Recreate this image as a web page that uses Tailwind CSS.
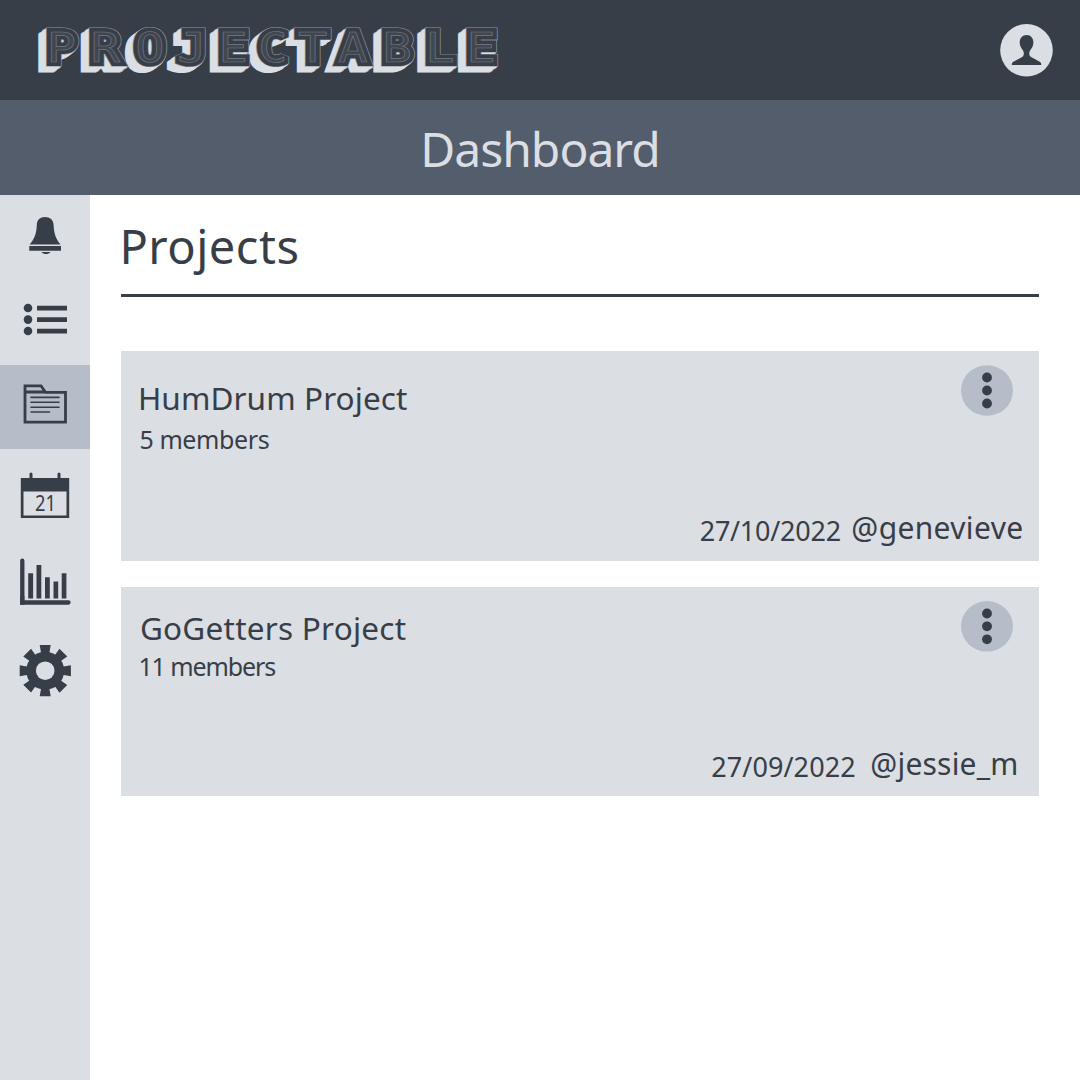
<!DOCTYPE html>
<html lang="en">
<head>
<meta charset="utf-8">
<title>Projectable</title>
<script src="https://cdn.jsdelivr.net/npm/@tailwindcss/browser@4"></script>
</head>
<body class="flex h-[1080px] w-[1080px] flex-col overflow-hidden bg-white font-['Noto_Sans','Open_Sans',sans-serif] text-[#383e48]">
<header class="flex h-[99.5px] shrink-0 items-center justify-between bg-[#383e48] pr-[27px]">
  <svg class="h-[99px] w-[510px]" viewBox="0 0 510 99" role="img" aria-label="Projectable" font-family="'DejaVu Sans Mono', monospace" font-size="41.5" text-anchor="middle" stroke-miterlimit="2">
    <g transform="scale(1.17 1)">
      <g fill="#dbdee3" stroke="#dbdee3" stroke-width="9.2">
        <use href="#wordmark" x="-6.700" y="6"/><use href="#wordmark" x="-5.900" y="5.25"/><use href="#wordmark" x="-5.100" y="4.5"/><use href="#wordmark" x="-4.200" y="3.75"/><use href="#wordmark" x="-3.400" y="3"/><use href="#wordmark" x="-2.500" y="2.25"/><use href="#wordmark" x="-1.700" y="1.5"/><use href="#wordmark" x="-.8" y=".75"/>
      </g>
      <use href="#wordmark" fill="#8f949c" stroke="#8f949c" stroke-width="9.2"/>
      <use href="#wordmark" fill="#383e48" stroke="#383e48" stroke-width="8"/>
      <g fill="#41474f" stroke="#747a84" stroke-width=".6"><text id="wordmark" x="52.500 90 128.200 164.200 199.200 233.200 267.100 301.700 339.500 376 411.200" y="62.2">PROJECTABLE</text></g>
    </g>
  </svg>
  <svg class="mt-[1px] h-[53px] w-[53px]" viewBox="0 0 53 53"><circle cx="26.5" cy="26.3" r="26.3" fill="#dbdee3"/><path fill="#383e48" d="M26.7 11c-4.500 0-7 3.300-7 7.500 0 3.500 1.500 5.500 3 7.500 1.400 2 1.600 4.500.3 6.300-1.800 1.500-6.500 3.500-9.200 5.200-1.500.9-2 1.500-2 3.500h29.500c0-2-.5-2.600-2-3.500-2.700-1.700-7.400-3.700-9.200-5.200-1.300-1.800-1.100-4.300.3-6.300 1.500-2 3-4 3-7.500 0-4.200-2.500-7.500-6.700-7.500z"/></svg>
</header>
<div class="flex h-[95.500px] shrink-0 justify-center bg-[#545d6b] pt-[25.5px]">
  <h1 class="text-[48px] leading-none tracking-[-1px] text-[#dbdee3]">Dashboard</h1>
</div>
<div class="flex grow">
  <nav class="flex w-[90px] shrink-0 flex-col items-center bg-[#dbdee3]">
    <a class="h-[85px] w-full"><svg class="h-full w-full" viewBox="0 0 90 85" fill="#383e48"><path d="M45 22c-5 0-8 3-8.200 7.700-.2 8-2.300 14.500-7.200 19.800h31c-4.900-5.300-6.700-11.800-7-19.800-.2-4.700-3.600-7.700-8.600-7.700zM29.300 51h31.700v4.800H29.300zM41.500 57h9c-2 2.800-7 2.800-9 0z"/></svg></a>
    <a class="h-[85px] w-full"><svg class="h-full w-full" viewBox="0 0 90 85" fill="#383e48"><circle cx="28" cy="28" r="4.300"/><circle cx="28" cy="39.600" r="4.300"/><circle cx="28" cy="51" r="4.300"/><path d="M37 25.700h30v4.800H37zM37 37.200h30V42H37zM37 48.700h30v4.800H37z"/></svg></a>
    <a class="h-[84px] w-full bg-[#b6bdc8]"><svg class="h-full w-full" viewBox="0 0 90 84" fill="none" stroke="#383e48"><path stroke-width="2.800" d="M25 42.500V20.800h16l4.500 6.500H65.500V57.200H25V27h20.500"/><path stroke-width="1.600" stroke-linecap="round" d="M31 32.400h28M31 37.300h28M31 42.200h28M31 47h18.500"/></svg></a>
    <a class="h-[87px] w-full"><svg class="h-full w-full" viewBox="0 0 90 87" fill="#383e48"><path fill-rule="evenodd" d="M20.800 29H69.200v40H20.800zM23.500 42.500v24h43v-24z"/><path fill="none" stroke="#383e48" stroke-width="3" stroke-linecap="round" d="M31 25v6M59 25v6"/><text x="45.500" y="62.300" text-anchor="middle" font-size="21.500" textLength="21" lengthAdjust="spacingAndGlyphs">21</text></svg></a>
    <a class="h-[88px] w-full"><svg class="h-full w-full" viewBox="0 0 90 88" fill="#383e48"><path fill="none" stroke="#383e48" stroke-width="4.300" stroke-linecap="round" d="M22.300 24.700V66.500H68.500"/><path d="M20.200 60h4.200v8.700h-4.200zM28.200 37.200h4.900v25.300h-4.900zM36.500 29h4.800v33.500h-4.800zM45 41.200h4.800v21.300H45zM53.500 45.500h4.700v17h-4.700zM61.700 37.200h4.700v25.300h-4.700z"/></svg></a>
    <a class="h-[88px] w-full"><svg class="h-full w-full" viewBox="0 0 90 88" fill="#383e48"><g transform="translate(45.200 46.700)"><path id="teeth" d="M-5.500-25.700H5.500L4-17V17L5.500 25.500H-5.500L-4 17V-17z"/><use href="#teeth" transform="rotate(45)"/><use href="#teeth" transform="rotate(90)"/><use href="#teeth" transform="rotate(135)"/><circle r="19"/><circle r="9.300" fill="#dbdee3"/></g></svg></a>
  </nav>
  <main class="flex grow flex-col pt-[28px] pr-[41px] pl-[31.400px]">
    <h2 class="ml-[-4px] pl-[2px] text-[47px] leading-none tracking-[0.5px]">Projects</h2>
    <div class="mt-[24px] h-[3px] w-full bg-[#383e48]"></div>
    <article class="mt-[54px] flex h-[209.500px] shrink-0 flex-col justify-between bg-[#dbdee3]">
      <div class="flex justify-between pr-[26px] pl-[16.5px]">
        <div class="pt-[31px]">
          <h3 class="text-[31.5px] leading-none tracking-[0.090px]">HumDrum Project</h3>
          <p class="mt-[13px] pl-[1.5px] text-[25px] leading-none tracking-[-0.4px]">5 members</p>
        </div>
        <button class="mt-[14px] h-[51px] w-[52px]" aria-label="Project options"><svg class="h-full w-full" viewBox="0 0 52 51"><ellipse cx="26" cy="25.500" rx="26" ry="25.300" fill="#b6bdc8"/><g fill="#383e48"><circle cx="26" cy="12.500" r="4.900"/><circle cx="26" cy="25.500" r="4.900"/><circle cx="26" cy="38.500" r="4.900"/></g></svg></button>
      </div>
      <div class="flex items-end justify-end gap-[10.500px] pr-[15.500px] pb-[16.500px]">
        <time class="text-[27px] leading-none tracking-[-0.25px]">27/10/2022</time>
        <span class="mb-[1px] text-[30px] leading-none tracking-[0.350px]">@genevieve</span>
      </div>
    </article>
    <article class="mt-[26.500px] flex h-[209px] shrink-0 flex-col justify-between bg-[#dbdee3]">
      <div class="flex justify-between pr-[26px] pl-[18.5px]">
        <div class="pt-[25px]">
          <h3 class="text-[31.5px] leading-none tracking-[0.240px]">GoGetters Project</h3>
          <p class="mt-[10px] ml-[-1.500px] text-[25px] leading-none tracking-[-1.100px]">11 members</p>
        </div>
        <button class="mt-[14px] h-[51px] w-[52px]" aria-label="Project options"><svg class="h-full w-full" viewBox="0 0 52 51"><ellipse cx="26" cy="25.300" rx="26" ry="25.300" fill="#b6bdc8"/><g fill="#383e48"><circle cx="26" cy="12.500" r="4.900"/><circle cx="26" cy="25.300" r="4.900"/><circle cx="26" cy="38.300" r="4.900"/></g></svg></button>
      </div>
      <div class="flex items-end justify-end gap-[14.500px] pr-[20.500px] pb-[16.500px]">
        <time class="text-[27px] leading-none tracking-[0.1px]">27/09/2022</time>
        <span class="mb-[1px] text-[30px] leading-none tracking-[0.200px]">@jessie_m</span>
      </div>
    </article>
  </main>
</div>
</body>
</html>
